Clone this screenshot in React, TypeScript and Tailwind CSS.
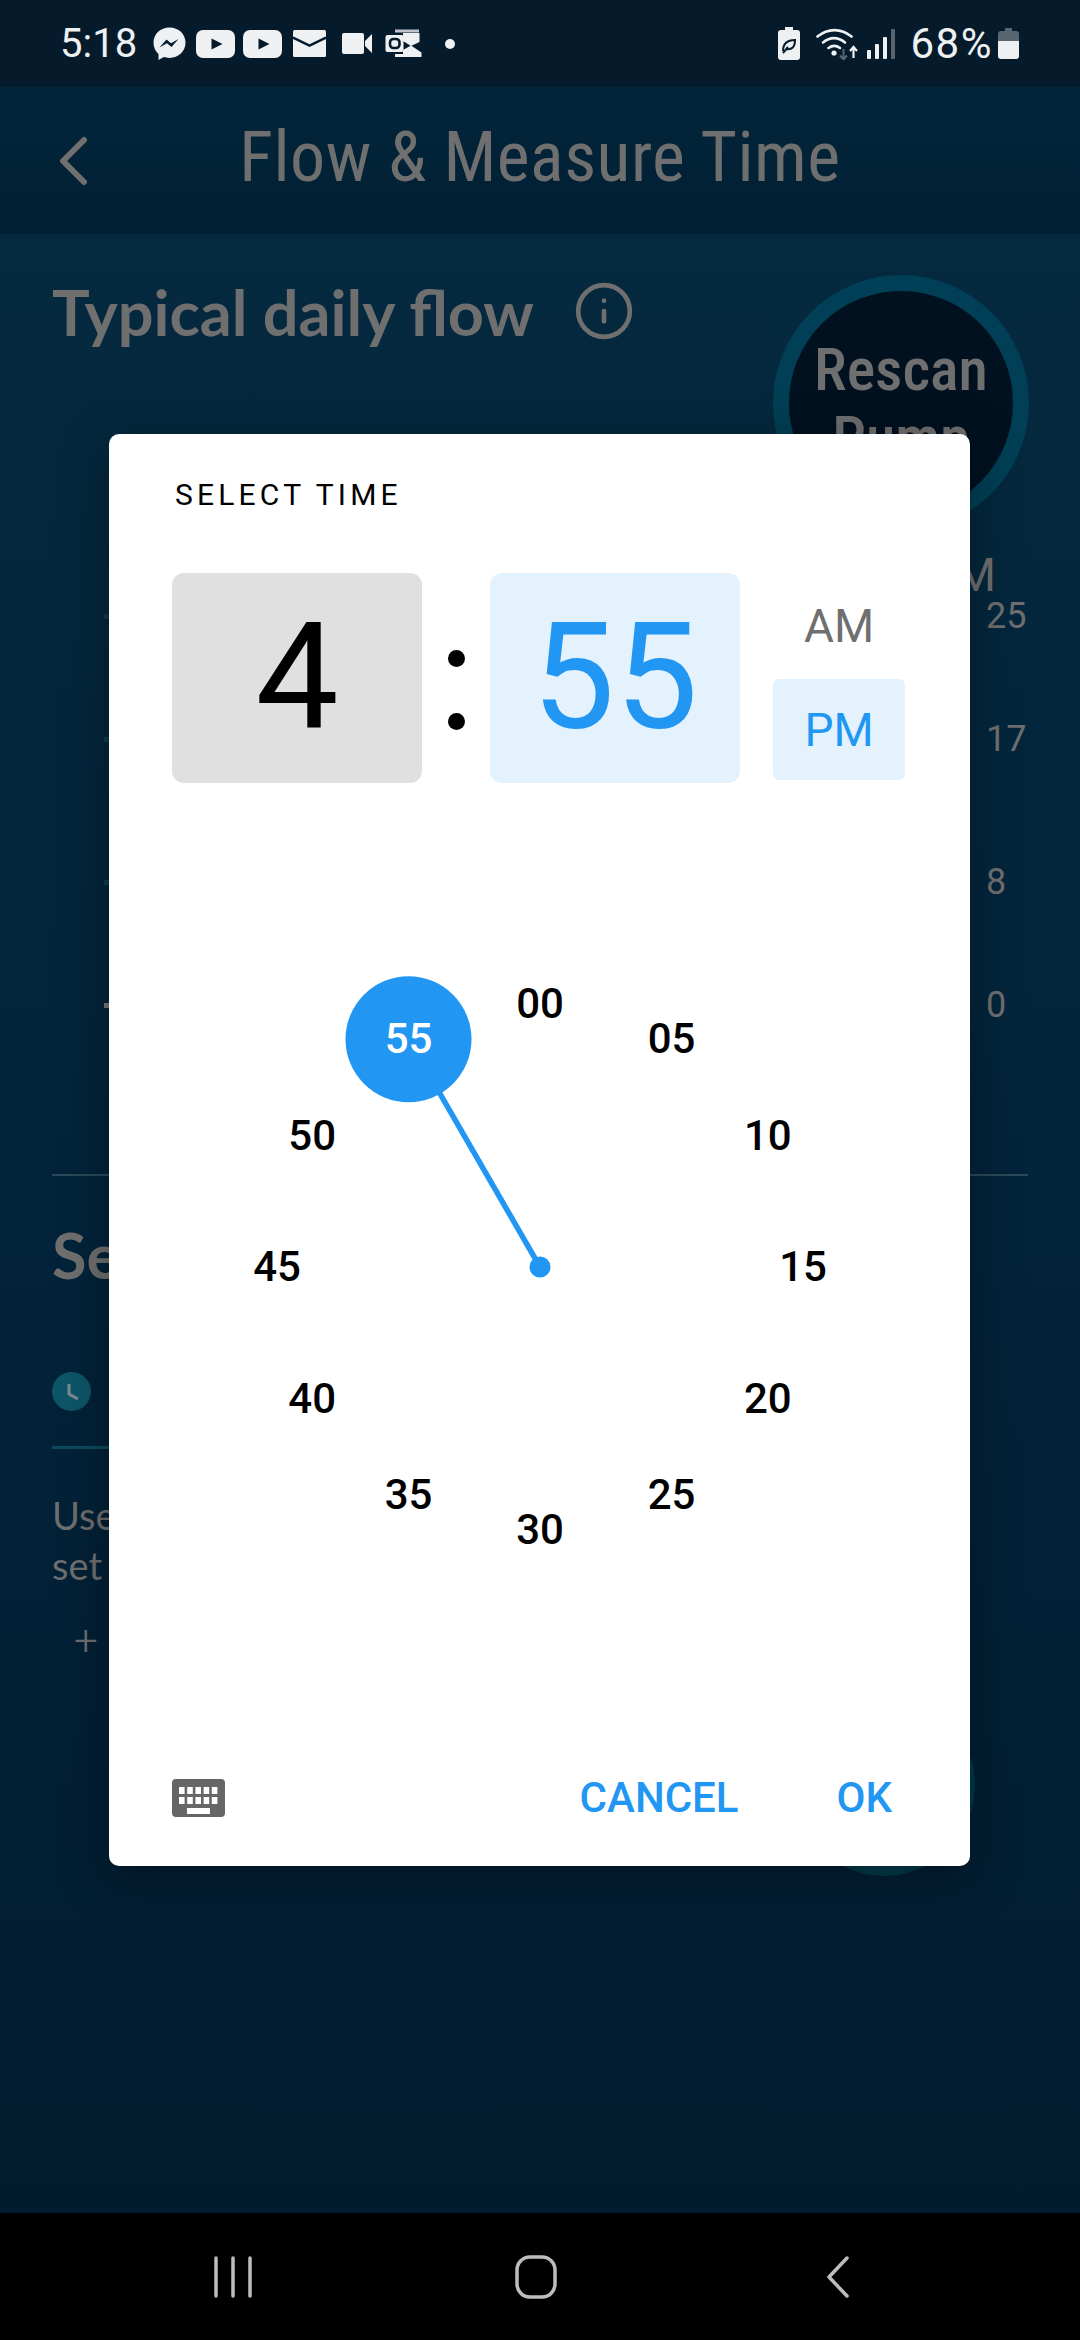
import { Info } from 'lucide-react';

const ROBOTO = "font-['Roboto',sans-serif]";
const DIM = 'text-[#6f6f6f]';

const MINUTES = ['00', '05', '10', '15', '20', '25', '30', '35', '40', '45', '50', '55'];

function ClockFace() {
  const cx = 431;
  const cy = 350;
  const r = 263;
  return (
    <div className="relative h-[700px] w-full mt-[134px]">
      <svg className="absolute inset-0" width="861" height="700">
        <line x1={cx} y1={cy} x2={cx - r * 0.5} y2={cy - r * 0.866} stroke="#2196f3" strokeWidth="5.5" />
        <circle cx={cx} cy={cy} r="10.5" fill="#2196f3" />
        <circle cx={cx - r * 0.5} cy={cy - r * 0.866} r="63" fill="#2196f3" />
      </svg>
      {MINUTES.map((m, i) => {
        const a = (i * 30 * Math.PI) / 180;
        return (
          <span
            key={m}
            className={`absolute -translate-x-1/2 -translate-y-1/2 text-[42px] leading-none font-medium ${
              m === '55' ? 'text-white' : 'text-black'
            }`}
            style={{ left: cx + r * Math.sin(a), top: cy - r * Math.cos(a) }}
          >
            {m}
          </span>
        );
      })}
    </div>
  );
}

function TimeDialog() {
  return (
    <div className={`absolute left-[109px] top-[434px] w-[861px] h-[1432px] flex flex-col rounded-[10px] bg-white shadow-[0_10px_50px_rgba(0,0,0,0.35)] ${ROBOTO}`}>
      <div className="mt-[46px] ml-[66px] h-[30px] text-[30px] leading-[30px] tracking-[0.14em] text-black">
        SELECT TIME
      </div>

      <div className="mt-[63px] ml-[63px] flex">
        <div className="flex h-[210px] w-[250px] items-center justify-center rounded-[12px] bg-[#e0e0e0] text-[148px] leading-none text-black">
          4
        </div>
        <div className="flex w-[68px] flex-col items-center justify-center gap-[46px] pt-[24px]">
          <span className="h-[17px] w-[17px] rounded-full bg-black" />
          <span className="h-[17px] w-[17px] rounded-full bg-black" />
        </div>
        <div className="flex h-[210px] w-[250px] items-center justify-center rounded-[12px] bg-[#e3f2fd] text-[148px] leading-none text-[#2196f3]">
          55
        </div>
        <div className="ml-[33px] flex w-[132px] flex-col">
          <div className="flex h-[106px] items-center justify-center text-[46px] leading-none text-[#6f6f6f]">AM</div>
          <div className="flex h-[101px] items-center justify-center rounded-[6px] bg-[#e3f2fd] text-[46px] leading-none text-[#2196f3]">PM</div>
        </div>
      </div>

      <ClockFace />

      <div className="mt-auto mb-[18px] flex h-[100px] items-center pl-[63px] pr-[78px]">
        <svg width="53" height="38" viewBox="0 0 53 38">
          <rect width="53" height="38" rx="4" fill="#666" />
          {[0, 1, 2, 3, 4].map((i) => (
            <g key={i} fill="#fff">
              <rect x={7 + i * 8.2} y="8" width="5.6" height="7" />
              <rect x={7 + i * 8.2} y="18" width="5.6" height="7" />
            </g>
          ))}
          <rect x="15" y="29" width="23" height="6" fill="#fff" />
        </svg>
        <span className="ml-auto text-[42px] leading-none font-medium text-[#2196f3]">CANCEL</span>
        <span className="ml-[98px] text-[42px] leading-none font-medium text-[#2196f3]">OK</span>
      </div>
    </div>
  );
}

function StatusBar() {
  const ic = '#eef0f2';
  return (
    <div className={`flex h-[87px] items-center bg-[#051b2c] pl-[60px] pr-[61px] ${ROBOTO}`}>
      <span className="text-[40px] leading-none text-[#eef0f2]">5:18</span>
      <div className="ml-[16px] flex items-center">
        {/* messenger */}
        <svg width="33" height="34" viewBox="0 0 33 34">
          <path d="M16.5 0.5C7.4 0.5 0.5 7 0.5 15.8c0 4.6 1.9 8.6 5 11.3v6l5.4-3c1.8.5 3.6.8 5.6.8 9.1 0 16-6.6 16-15.1C32.500 7 25.600 0.5 16.500 0.500z" fill={ic} />
          <path d="M6.500 20.500l7-8 4.500 3.800 7.500-4.300-7 8-4.500-3.800z" fill="#051b2c" />
        </svg>
        {/* youtube x2 */}
        {[10, 8].map((ml, i) => (
          <svg key={i} width="39" height="28" viewBox="0 0 39 28" style={{ marginLeft: ml }}>
            <rect width="39" height="28" rx="7" fill={ic} />
            <path d="M15.500 8.500l11 5.500-11 5.500z" fill="#051b2c" />
          </svg>
        ))}
        {/* mail */}
        <svg className="ml-[11px]" width="33" height="27" viewBox="0 0 33 27">
          <rect width="33" height="27" rx="1.500" fill={ic} />
          <path d="M0 7.500l16.500 8 16.500-8" fill="none" stroke="#051b2c" strokeWidth="2.500" />
        </svg>
        {/* video */}
        <svg className="ml-[16px]" width="30" height="21" viewBox="0 0 30 21">
          <rect width="22" height="21" rx="2" fill={ic} />
          <path d="M23 8l7-7v19l-7-7z" fill={ic} />
        </svg>
        {/* outlook */}
        <svg className="ml-[13px]" width="37" height="29" viewBox="0 0 37 29">
          <path d="M10 0.500h24v3h-24z" fill={ic} opacity="0.8" />
          <path d="M18 4h16.500v9l-8.500 4-8-5zM18 21l8-4.500 10.500 7v4.500H10v-3h8z" fill={ic} />
          <rect x="0.500" y="6" width="18" height="17" rx="2" fill={ic} />
          <rect x="5" y="10" width="9.500" height="9" rx="3.500" fill="none" stroke="#051b2c" strokeWidth="2.600" />
        </svg>
        <span className="ml-[23px] h-[10px] w-[10px] rounded-full bg-[#eef0f2]" />
      </div>

      <div className="ml-auto flex items-center">
        {/* power saving battery */}
        <svg width="22" height="33" viewBox="0 0 22 33">
          <path d="M7 0h8v3h4a3 3 0 0 1 3 3v24a3 3 0 0 1-3 3H3a3 3 0 0 1-3-3V6a3 3 0 0 1 3-3h4z" fill={ic} />
          <path d="M5 24c0-7 4-11 12-11 0 7-3 10-9 9M5 26l5-6" fill="none" stroke="#051b2c" strokeWidth="2" />
        </svg>
        {/* wifi */}
        <svg className="ml-[16px]" width="42" height="32" viewBox="0 0 42 32">
          <g fill="none" stroke={ic} strokeWidth="2.600" strokeLinecap="round">
            <path d="M1.500 8.500C12 0 25 0 35.500 8.500" />
            <path d="M7 14.500c7-5.500 15-5.500 22 0" />
            <path d="M12.500 20c3.500-2.500 8-2.500 11.500 0" />
          </g>
          <circle cx="18" cy="25" r="2.600" fill={ic} />
          <path d="M27.500 31V21M24 24.500l3.500-4 3.500 4" fill="none" stroke="#59666f" strokeWidth="2" transform="rotate(180 27.500 26)" />
          <path d="M37.500 30V19M34 23l3.500-4 3.500 4" fill="none" stroke={ic} strokeWidth="2.200" />
        </svg>
        {/* signal */}
        <svg className="ml-[9px]" width="28" height="30" viewBox="0 0 28 30">
          <rect x="0" y="21" width="4" height="9" rx="1" fill={ic} />
          <rect x="8" y="15" width="4" height="15" rx="1" fill={ic} />
          <rect x="16" y="8" width="4" height="22" rx="1" fill={ic} />
          <rect x="24" y="0" width="4" height="30" rx="1" fill="#59666f" />
        </svg>
        <span className="ml-[16px] text-[42px] leading-none tracking-[1.5px] text-[#eef0f2]">68%</span>
        <svg className="ml-[5px]" width="21" height="31" viewBox="0 0 21 31">
          <path d="M7 0h7v3h4a3 3 0 0 1 3 3v7H0V6a3 3 0 0 1 3-3h4z" fill="#59666f" />
          <path d="M0 13h21v15a3 3 0 0 1-3 3H3a3 3 0 0 1-3-3z" fill={ic} />
        </svg>
      </div>
    </div>
  );
}

function AxisRow({ value, tick, className }: { value: string; tick: string; className: string }) {
  return (
    <div className={`flex h-[40px] items-center ${className}`}>
      <span className={`ml-[104px] h-[5px] w-[6px] ${tick}`} />
      <span className={`ml-auto w-[94px] text-[36px] leading-none text-[#6f6f6f] ${ROBOTO}`}>{value}</span>
    </div>
  );
}

function Background() {
  return (
    <div className="flex h-[2340px] w-[1080px] flex-col bg-black">
      <StatusBar />

      <div className="flex h-[147px] items-center bg-gradient-to-b from-[#03253b] to-[#011f33]">
        <svg className="ml-[58px]" width="30" height="50" viewBox="0 0 30 50">
          <path d="M26 4L5 25l21 21" fill="none" stroke="#6f6f6f" strokeWidth="6" strokeLinecap="round" strokeLinejoin="round" />
        </svg>
        <div className={`-mt-[8px] flex-1 pr-[88px] text-center text-[70px] leading-none font-normal tracking-[0.5px] font-stretch-condensed ${DIM} ${ROBOTO}`}>
          Flow &amp; Measure Time
        </div>
      </div>

      <div className="flex-1 bg-gradient-to-b from-[#05293f] via-[#03233a] to-[#021c2f]">
        <div className="flex items-start pl-[52px]">
          <h1 className={`mt-[43px] text-[63px] leading-[70px] font-bold font-['Lato',sans-serif] ${DIM}`}>Typical daily flow</h1>
          <Info className="ml-[39px] mt-[46px] text-[#6f6f6f]" size={62} strokeWidth={1.8} />
          <div className="ml-auto mr-[51px] mt-[41px] flex h-[256px] w-[256px] flex-col items-center overflow-hidden rounded-full border-[16px] border-[#003f55] bg-[#01111f] pt-[45px]">
            <span className={`text-[60px] leading-[68px] font-medium font-stretch-condensed ${DIM} ${ROBOTO}`}>Rescan</span>
            <span className={`text-[60px] leading-[68px] font-medium font-stretch-condensed ${DIM} ${ROBOTO}`}>Pump</span>
          </div>
        </div>

        <div className="flex flex-col">
          <div className={`mt-[21px] ml-auto mr-[84px] text-[46px] leading-none ${DIM} ${ROBOTO}`}>PM</div>
          <AxisRow value="25" tick="bg-[#0d3a50]" className="-mt-[2px]" />
          <AxisRow value="17" tick="bg-[#0d3a50]" className="mt-[83px]" />
          <AxisRow value="8" tick="bg-[#0d3a50]" className="mt-[103px]" />
          <AxisRow value="0" tick="bg-[#777]" className="mt-[83px]" />
        </div>

        <div className="mx-[52px] mt-[149px] h-[2px] bg-[#2c4858]" />

        <div className="pl-[52px]">
          <h2 className={`mt-[44px] text-[63px] leading-[70px] font-bold font-['Lato',sans-serif] ${DIM}`}>Se</h2>
          <div className="mt-[82px] flex h-[39px] w-[39px] items-center justify-center rounded-full bg-[#0d5568]">
            <svg width="24" height="24" viewBox="0 0 24 24">
              <path d="M9 4v10l9 5" fill="none" stroke="#7c8a90" strokeWidth="3" />
            </svg>
          </div>
        </div>
        <div className="ml-[52px] mr-[300px] mt-[35px] h-[3px] bg-[#0b4a5e]" />
        <p className={`mt-[41px] ml-[52px] text-[38px] leading-[50px] font-['Lato',sans-serif] ${DIM}`}>
          Use
          <br />
          set
        </p>
        <div className={`ml-[74px] mt-[30px] text-[42px] leading-none font-light ${DIM} ${ROBOTO}`}>+</div>
        <div className="ml-[793px] mt-[32px] h-[182px] w-[182px] rounded-full bg-[#003a4a]" />
      </div>

      <div className="flex h-[127px] items-center justify-between bg-black pl-[213px] pr-[230px]">
        <svg width="40" height="42" viewBox="0 0 40 42">
          <path d="M3 2v38M20 2v38M37 2v38" stroke="#bdbdbd" strokeWidth="3.500" strokeLinecap="round" />
        </svg>
        <svg className="mr-[8px]" width="42" height="44" viewBox="0 0 42 44">
          <rect x="2" y="2" width="38" height="40" rx="13" fill="none" stroke="#bdbdbd" strokeWidth="3.500" />
        </svg>
        <svg width="24" height="42" viewBox="0 0 24 42">
          <path d="M21 2L3 21l18 19" fill="none" stroke="#bdbdbd" strokeWidth="3.500" strokeLinecap="round" strokeLinejoin="round" />
        </svg>
      </div>
    </div>
  );
}

export default function App() {
  return (
    <div className="relative h-[2340px] w-[1080px] overflow-hidden">
      <Background />
      <TimeDialog />
    </div>
  );
}
